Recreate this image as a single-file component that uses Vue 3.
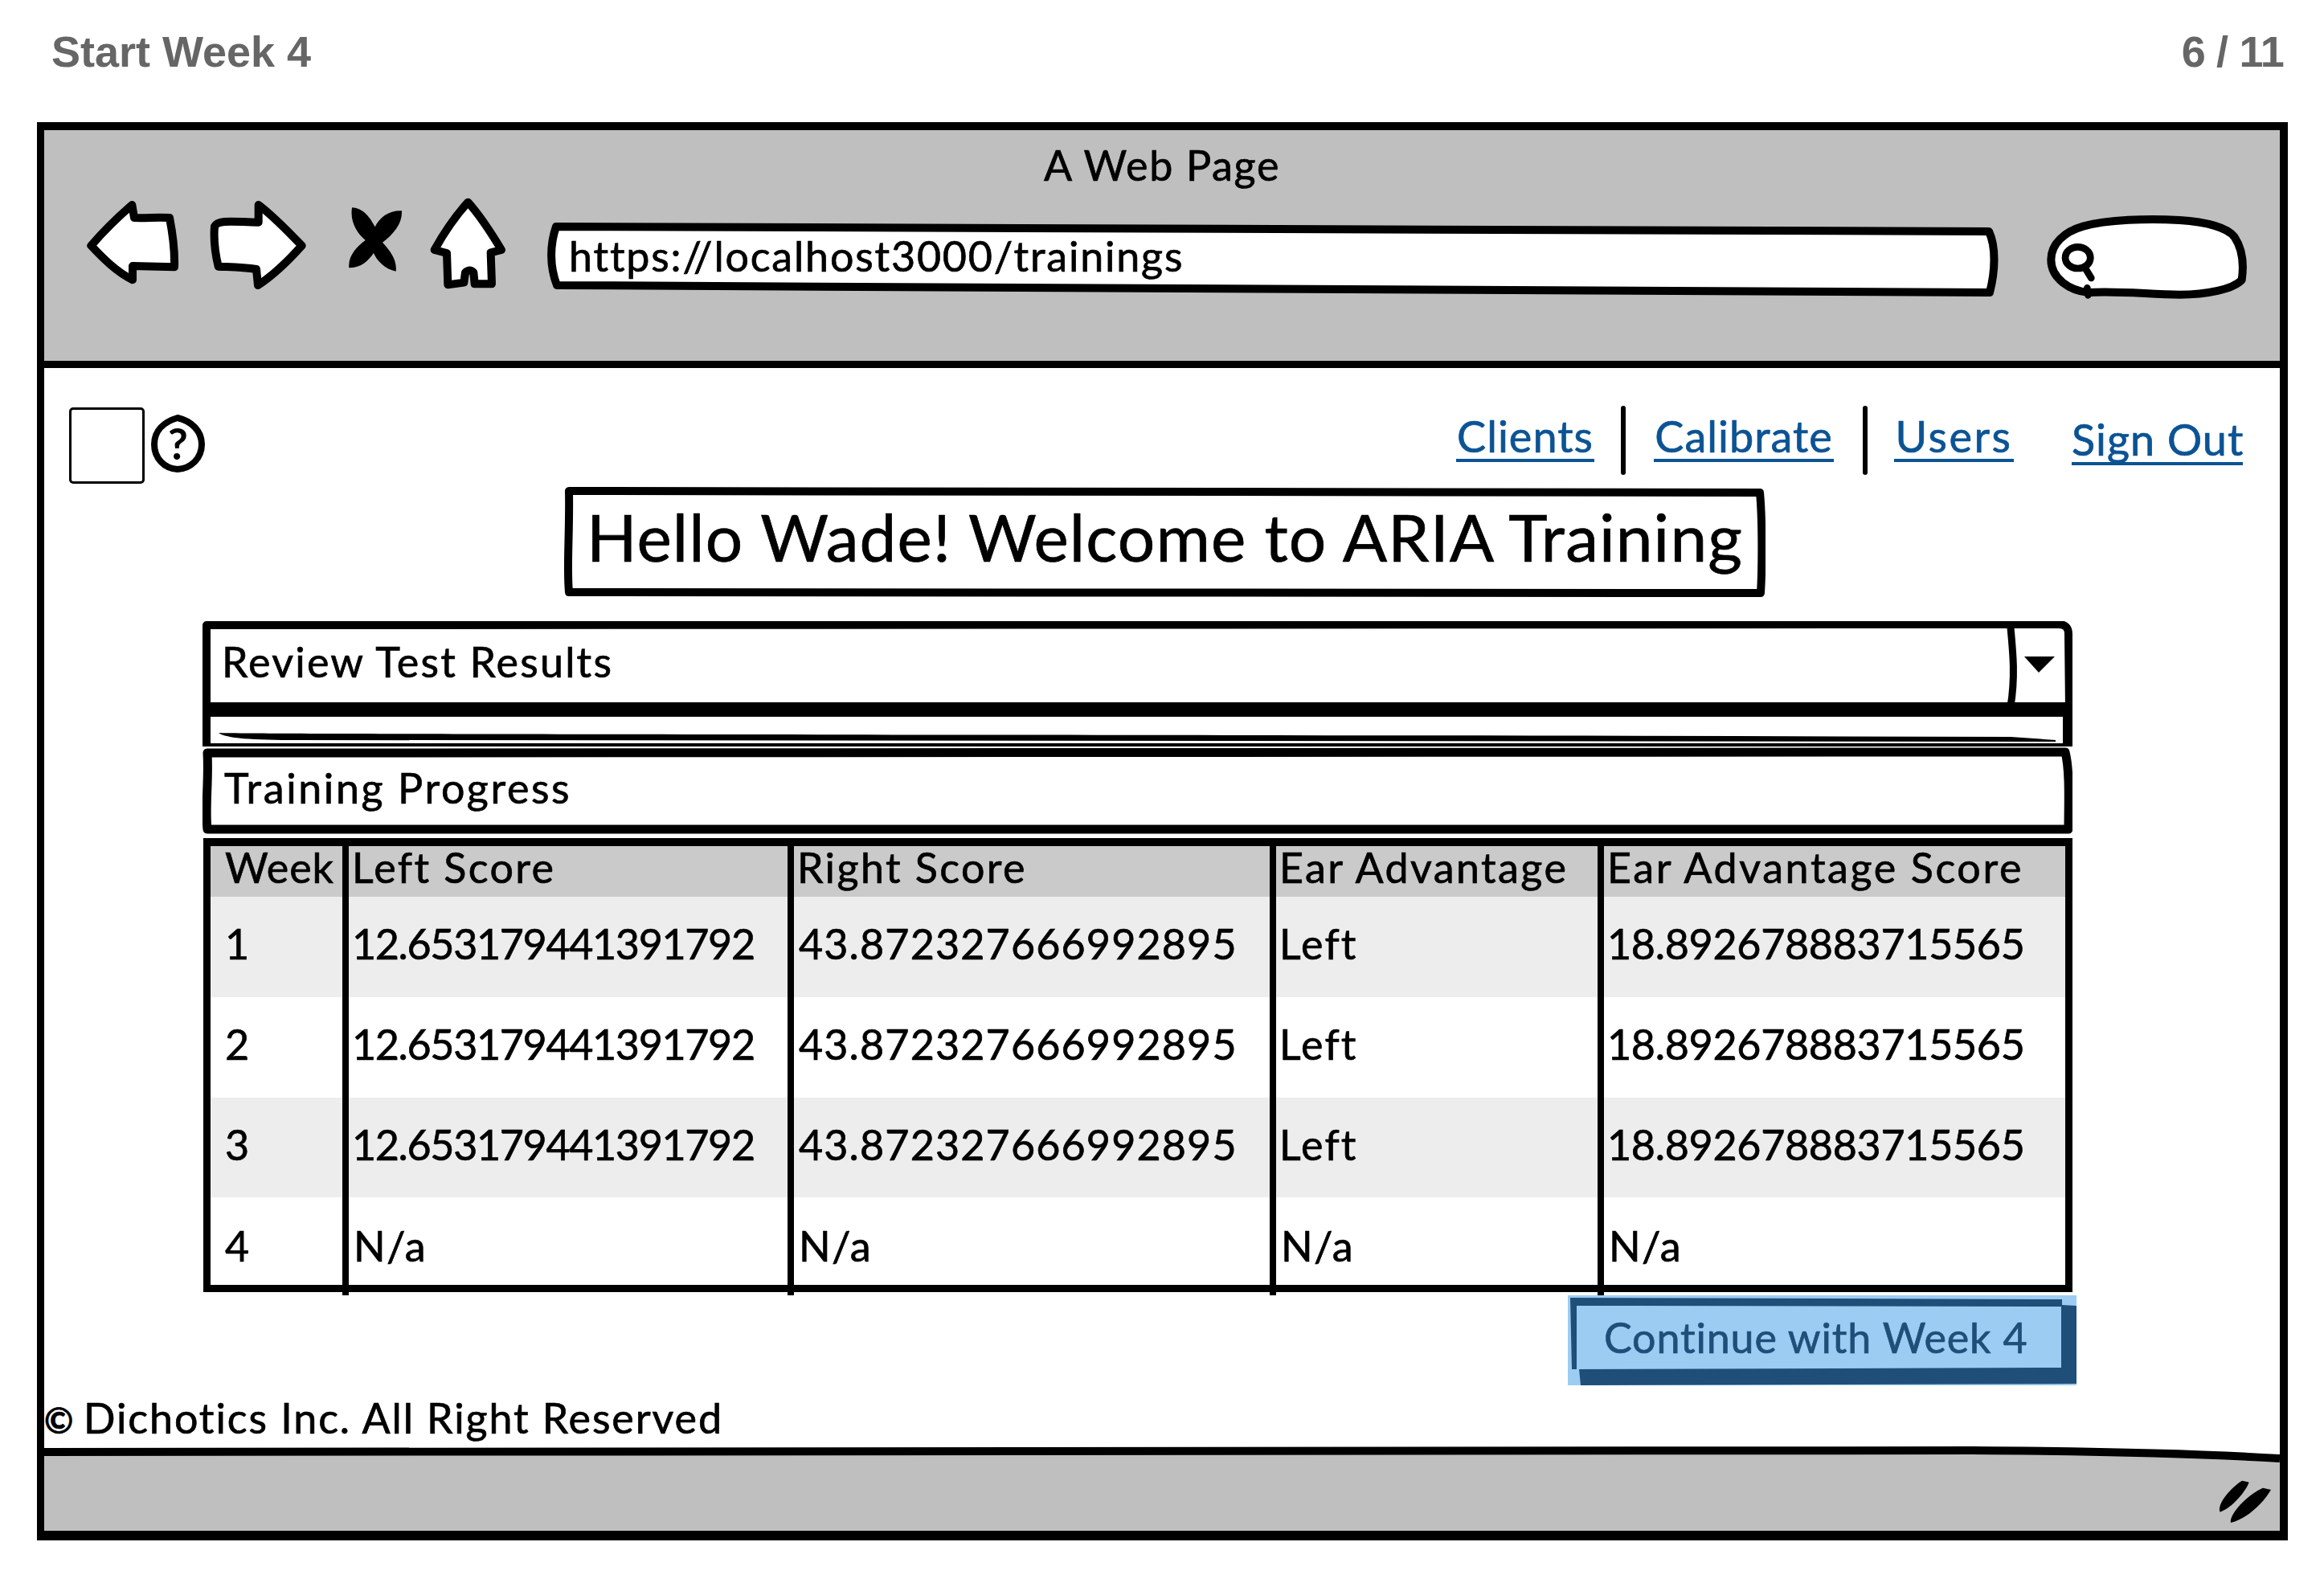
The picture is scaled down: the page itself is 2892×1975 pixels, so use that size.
<script setup>
const columns = [
  { name: 'Week', cls: 'tight' },
  { name: 'Left Score', cls: 'wide' },
  { name: 'Right Score', cls: 'wide' },
  { name: 'Ear Advantage', cls: 'wide' },
  { name: 'Ear Advantage Score', cls: 'wider' },
]
const rows = [
  { id: 1, cells: ['1', '12.653179441391792', '43.872327666992895', 'Left', '18.892678883715565'], cls: 'shade' },
  { id: 2, cells: ['2', '12.653179441391792', '43.872327666992895', 'Left', '18.892678883715565'], cls: '' },
  { id: 3, cells: ['3', '12.653179441391792', '43.872327666992895', 'Left', '18.892678883715565'], cls: 'shade low' },
  { id: 4, cells: ['4', 'N/a', 'N/a', 'N/a', 'N/a'], cls: 'last' },
]
const spacing = { 1: 'num-a', 2: 'num-b', 3: 'word', 4: 'num-c' }
function cellClass(i, cell) {
  if (i === 0) return ''
  if (cell === 'N/a') return 'na'
  return spacing[i] || ''
}
</script>

<template>
  <div class="page">
    <header class="slide-head">
      <span>Start Week 4</span>
      <span class="count">6 / 11</span>
    </header>

    <section class="window">
      <div class="chrome">
        <div class="page-name">A Web Page</div>
        <div class="toolbar">
          <svg class="back" width="120" height="110" viewBox="30 30 360 330">
            <path class="outline" d="M55 212 C100 160 150 110 208 60 L216 108 C260 110 300 105 348 108 C360 170 368 230 366 292 L210 288 L210 340 C150 310 100 260 55 212 Z" />
          </svg>
          <svg class="forward" width="127" height="118" viewBox="489 30 381 354">
            <path class="outline" d="M680 60 C740 105 790 160 842 212 C790 270 740 320 678 360 L672 300 C620 292 570 292 530 290 C518 240 512 190 516 140 C530 112 600 125 680 125 Z" />
          </svg>
          <svg class="stop" width="68" height="82" viewBox="21 66 204 246">
            <path d="M36 70 C80 72 105 110 122 142 C140 105 175 80 222 82 C225 130 190 170 150 200 C178 230 205 265 200 308 C160 300 130 270 117 240 C95 270 70 295 25 295 C20 250 55 215 86 192 C55 165 28 125 36 70 Z" />
          </svg>
          <svg class="home" width="96" height="115" viewBox="330 30 288 345">
            <path class="outline" d="M475 50 C525 105 565 170 600 228 L560 238 L564 355 L500 355 L496 312 Q482 298 465 312 L460 350 L400 358 L396 240 L350 228 C385 165 425 105 475 50 Z" />
          </svg>
          <div class="url">
            <svg class="frame" width="1806" height="92" viewBox="0 0 1806 92">
              <path class="box" d="M11 5 L1794 11 C1803 30 1802 60 1795 87 L12 78 C3 55 3 28 11 5 Z" />
            </svg>
            <span class="label">https://localhost3000/trainings</span>
          </div>
          <svg class="search" width="251" height="104" viewBox="21 24 753 312">
            <path class="outline" d="M180 312 C110 305 40 260 40 190 C40 130 90 85 160 65 C250 40 400 35 520 42 C620 48 700 70 725 105 C755 150 760 210 752 265 C720 300 620 320 520 320 C400 318 280 305 180 312 Z" />
            <path class="lens" d="M175 295 L178 322" />
            <ellipse class="lens" cx="140" cy="182" rx="47" ry="40" />
            <path class="lens" d="M170 225 L190 258" />
          </svg>
        </div>
      </div>

      <div class="content">
        <div class="topbar">
          <div class="square"></div>
          <div class="help">
            <svg class="frame" width="67" height="72" viewBox="0 0 67 72">
              <path d="M33 4 C50 8 63 20 63 37 C63 54 50 67 33 68 C16 67 4 54 4 37 C4 20 16 9 33 4 Z" />
            </svg>
            <span class="label">?</span>
          </div>
          <nav class="links">
            <a class="link clients">Clients</a>
            <i class="sep first"></i>
            <a class="link calibrate">Calibrate</a>
            <i class="sep second"></i>
            <a class="link users">Users</a>
            <a class="link signout">Sign Out</a>
          </nav>
        </div>

        <div class="title">
          <svg class="frame" width="1495" height="138" viewBox="0 0 1495 138">
            <path class="box" d="M6 6 L1488 8 C1491 40 1491 100 1489 133 L6 132 C3 100 7 60 6 6 Z" />
          </svg>
          <h1 class="label">Hello Wade! Welcome to ARIA Training</h1>
        </div>

        <div class="stack">
          <div class="select">
            <svg class="frame" width="2327" height="119" viewBox="0 0 2327 119">
              <path class="box" d="M5 5 L2310 4 Q2322 4 2322 16 L2323 110 L5 110 Z" />
              <path class="line" d="M2250 8 C2253 40 2256 70 2250 106" />
              <rect x="0" y="101" width="2327" height="18" />
              <polygon points="2267,44 2305,44 2285,64" />
            </svg>
            <span class="label">Review Test Results</span>
          </div>

          <div class="list">
            <svg class="frame" width="2327" height="37" viewBox="0 0 2327 37">
              <rect x="0" y="0" width="10" height="37" />
              <rect x="2315" y="0" width="12" height="37" />
              <rect x="0" y="33" width="2327" height="4" />
              <path d="M20 20 C60 22 1200 22 2250 25 L2306 29 L2306 31 L120 29 C60 29 30 27 20 20 Z" />
            </svg>
          </div>

          <div class="panel">
            <svg class="frame" width="2327" height="108" viewBox="0 0 2327 108">
              <path class="heavy" d="M6 7 L2318 6 C2324 30 2322 70 2322 102 L6 102 C3 75 8 40 6 7 Z" />
            </svg>
            <span class="label">Training Progress</span>
          </div>

          <table class="scores">
            <colgroup>
              <col class="c1" /><col class="c2" /><col class="c3" /><col class="c4" /><col class="c5" />
            </colgroup>
            <thead>
              <tr>
                <th v-for="col in columns" :key="col.name" :class="col.cls">{{ col.name }}</th>
              </tr>
            </thead>
            <tbody>
              <tr v-for="row in rows" :key="row.id" :class="row.cls">
                <td v-for="(cell, i) in row.cells" :key="i" :class="cellClass(i, cell)">{{ cell }}</td>
              </tr>
            </tbody>
          </table>
        </div>

        <button class="continue">
          <svg class="frame" width="633" height="112" viewBox="0 0 633 112">
            <path fill-rule="evenodd" d="M3 3 L615 5 L615 12 L633 13 L633 110 L16 112 L14 92 L5 92 Z M11 13 L614 14 L614 90 L11 92 Z" />
          </svg>
          <span class="label">Continue with Week 4</span>
        </button>

        <footer class="legal"><span class="mark">©</span>Dichotics Inc. All Right Reserved</footer>
      </div>

      <div class="status">
        <svg class="frame" width="2782" height="105" viewBox="0 0 2782 105">
          <path class="fill" d="M0 7 C700 11 1400 3 2400 5 C2550 6 2700 10 2782 15 L2782 105 L0 105 Z" />
          <path class="edge" d="M0 7 C700 11 1400 3 2400 5 C2550 6 2700 10 2782 15" />
        </svg>
        <svg class="grip" width="69" height="56" viewBox="54 33 207 168">
          <path d="M150 38 L176 44 C160 85 110 140 68 155 C55 130 100 70 150 38 Z" />
          <path d="M228 65 L258 72 C230 120 170 180 108 195 C100 165 170 90 228 65 Z" />
        </svg>
      </div>
    </section>
  </div>
</template>

<style>
html, body { margin: 0; background: #fff; }
</style>

<style scoped>
.page {
  width: 2892px;
  height: 1975px;
  overflow: hidden;
  background: #fff;
  font-family: Lato, "Noto Sans", sans-serif;
  color: #000;
}
.slide-head {
  height: 152px;
  box-sizing: border-box;
  padding: 34px 50px 0 64px;
  display: flex;
  justify-content: space-between;
  font: bold 54px/60px "Liberation Sans", Arial, sans-serif;
  color: #666;
}
.count { letter-spacing: -0.8px; }
.window {
  width: 2801px;
  height: 1765px;
  margin-left: 46px;
  box-sizing: border-box;
  border: solid #000;
  border-width: 10px 10px 12px 9px;
  display: flex;
  flex-direction: column;
  -webkit-text-stroke: 0.7px;
}
.chrome {
  height: 296px;
  flex: none;
  box-sizing: border-box;
  background: #bfbfbf;
  border-bottom: 9px solid #000;
}
.page-name {
  height: 84px;
  box-sizing: border-box;
  padding-top: 13px;
  text-align: center;
  font-size: 52px;
  line-height: 60px;
  letter-spacing: 1.7px;
}
.toolbar {
  display: flex;
  align-items: flex-start;
  padding-left: 50px;
}
.outline { fill: #fff; stroke: #000; stroke-width: 30; stroke-linejoin: round; }
.back { margin-top: -1px; }
.forward { margin: -1px 0 0 33px; }
.stop { margin: 11px 0 0 48px; }
.home { margin: -1px 0 0 33px; }
.url {
  position: relative;
  width: 1806px;
  height: 92px;
  margin: 31px 0 0 51px;
  display: flex;
  align-items: center;
}
.frame { position: absolute; left: 0; top: 0; display: block; }
.box { fill: #fff; stroke: #000; stroke-width: 10; stroke-linejoin: round; }
.heavy { fill: #fff; stroke: #000; stroke-width: 11; stroke-linejoin: round; }
.line { fill: none; stroke: #000; stroke-width: 9; stroke-linecap: round; }
.label { position: relative; }
.url .label { padding: 0 0 10px 27px; font-size: 52px; letter-spacing: 1.8px; }
.search { margin: 22px 0 0 59px; }
.lens { fill: none; stroke: #000; stroke-width: 26; stroke-linecap: round; }

.content {
  height: 1342px;
  flex: none;
}
.topbar {
  height: 147px;
  display: flex;
  align-items: flex-start;
}
.square {
  width: 94px;
  height: 95px;
  box-sizing: border-box;
  margin: 49px 0 0 31px;
  border: 3px solid #000;
  border-radius: 5px;
}
.help {
  position: relative;
  width: 67px;
  height: 72px;
  margin: 58px 0 0 8px;
  text-align: center;
  font-size: 54px;
  font-weight: 700;
  line-height: 72px;
  -webkit-text-stroke: 0;
}
.help path { fill: #fff; stroke: #000; stroke-width: 8; }
.links {
  margin: 0 46px 0 auto;
  display: flex;
  align-items: flex-start;
}
.link {
  height: 58px;
  margin-top: 53px;
  padding-top: 2px;
  border-bottom: 4px solid #0b5394;
  color: #0b5394;
  font-size: 54px;
  line-height: 60px;
  text-align: center;
  white-space: nowrap;
  letter-spacing: 1px;
}
.clients { width: 172px; }
.calibrate { width: 224px; margin-left: 35px; }
.users { width: 149px; margin-left: 33px; letter-spacing: 2.6px; }
.signout { width: 213px; margin: 57px 0 0 72px; }
.sep {
  width: 6px;
  height: 86px;
  margin-top: 47px;
  background: #000;
  border-radius: 3px;
}
.sep.first { margin-left: 33px; }
.sep.second { margin-left: 36px; }

.title {
  position: relative;
  width: 1495px;
  height: 138px;
  margin: 0 0 30px 647px;
  display: flex;
  align-items: center;
  justify-content: center;
}
.title h1 {
  margin: 0 0 14px;
  font-weight: 400;
  font-size: 82px;
  line-height: 100px;
  letter-spacing: 1.1px;
  white-space: nowrap;
}
.stack {
  width: 2327px;
  margin-left: 197px;
}
.select {
  position: relative;
  height: 119px;
  display: flex;
}
.select .label { padding: 20px 0 0 24px; font-size: 52px; line-height: 60px; height: 60px; letter-spacing: 2.2px; }
.list { position: relative; height: 37px; }
.panel {
  position: relative;
  height: 108px;
  margin-top: 1px;
  display: flex;
}
.panel .label { padding: 20px 0 0 27px; font-size: 52px; line-height: 60px; height: 60px; letter-spacing: 2.6px; }

.scores {
  width: 2326px;
  margin: 5px 0 0 1px;
  table-layout: fixed;
  border-collapse: separate;
  border-spacing: 0;
  border: solid #000;
  border-width: 10px 9px 9px;
  font-size: 52px;
  line-height: 60px;
}
.c1 { width: 172px; }
.c2 { width: 554px; }
.c3 { width: 600px; }
.c4 { width: 408px; }
.c5 { width: 574px; }
.scores th, .scores td {
  box-sizing: border-box;
  padding: 28px 0 0 4px;
  vertical-align: top;
  text-align: left;
  font-weight: 400;
  border-right: 8px solid #000;
  white-space: nowrap;
  position: relative;
}
.scores th:last-child, .scores td:last-child { border-right: 0; }
.scores th:first-child, .scores td:first-child { padding-left: 18px; }
.scores th {
  height: 63px;
  padding-top: 1px;
  background: #cacaca;
  line-height: 50px;
}
.tight { letter-spacing: 0.9px; }
.wide { letter-spacing: 2.4px; }
.wider { letter-spacing: 2.6px; }
.scores td.num-a { letter-spacing: -1.35px; }
.scores td.num-b { letter-spacing: 1.15px; padding-left: 6px; }
.scores td.num-c { letter-spacing: -0.3px; }
.word { letter-spacing: 2.2px; }
.scores td.na { letter-spacing: 1.3px; padding-left: 6px; }
.scores td { height: 125px; }
.scores .low td { height: 124px; }
.scores .last td { height: 109px; padding-top: 30px; }
.scores .shade td { background: #ededed; }
.scores .last td:not(:last-child)::after {
  content: "";
  position: absolute;
  right: -8px;
  bottom: -13px;
  width: 8px;
  height: 13px;
  background: #000;
}

.continue {
  position: relative;
  display: flex;
  align-items: center;
  width: 633px;
  height: 112px;
  margin: 4px 0 0 1896px;
  padding: 0 0 8px 45px;
  box-sizing: border-box;
  border: 0;
  background: #9dccf3;
  color: #1f4e79;
  font-family: inherit;
  font-size: 52px;
  letter-spacing: 0.85px;
  white-space: nowrap;
}
.continue path { fill: #1f4e79; }

.legal {
  height: 76px;
  box-sizing: border-box;
  padding-top: 10px;
  font-size: 52px;
  line-height: 60px;
  letter-spacing: 1.9px;
  white-space: nowrap;
}
.mark {
  display: inline-block;
  width: 49px;
  font-size: 44px;
  font-weight: 700;
  letter-spacing: 0;
}

.status {
  position: relative;
  height: 105px;
  flex: none;
  display: flex;
  justify-content: flex-end;
  align-items: flex-start;
}
.fill { fill: #bfbfbf; }
.edge { fill: none; stroke: #000; stroke-width: 10; }
.grip { position: relative; margin: 41px 10px 0 0; }
</style>
